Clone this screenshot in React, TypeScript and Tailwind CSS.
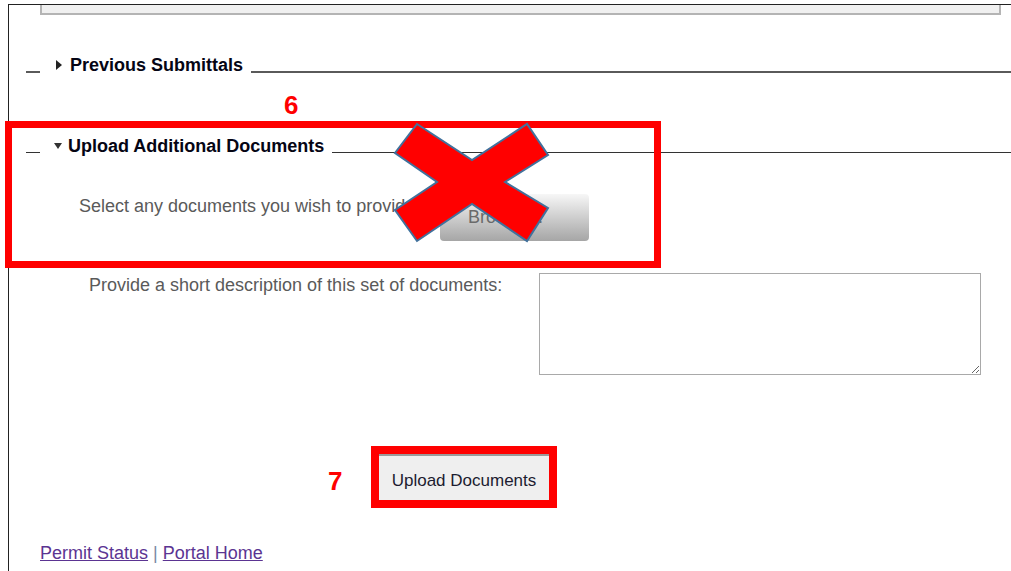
import React from "react";

// Collapsible section header drawn like a fieldset legend: short dash, caret, title, rule.
function SectionHeader({
  title,
  open,
  thick,
}: {
  title: string;
  open: boolean;
  thick?: boolean;
}) {
  const rule = thick ? "h-[2px] bg-[#5a5a5a]" : "h-px bg-[#333]";
  return (
    <div className="flex h-[24px] items-center">
      <div className={`ml-[17px] mt-[13px] w-[14px] ${rule}`}></div>
      {open ? (
        <span className="ml-[14px] mr-[6px] h-0 w-0 border-x-[4px] border-t-[6px] border-x-transparent border-t-[#333]"></span>
      ) : (
        <span className="ml-[16px] mr-[8px] h-0 w-0 border-y-[5px] border-l-[6px] border-y-transparent border-l-[#222]"></span>
      )}
      <span className="text-[18px] font-bold leading-[24px] text-[#050514]">
        {title}
      </span>
      <div className={`ml-[8px] mt-[13px] flex-1 ${rule}`}></div>
    </div>
  );
}

export default function App() {
  return (
    <div className="relative h-[571px] w-[1011px] overflow-hidden bg-white font-['Liberation_Sans',Arial,sans-serif]">
      {/* Page frame */}
      <div className="ml-[8px] mt-[4px] h-[567px] border-l border-t border-[#222]">
        {/* Bottom of the panel above */}
        <div className="ml-[31px] h-[10px] w-[961px] border-x-2 border-b-2 border-[#b4b4b4] bg-[#f0f0f0]"></div>

        <div className="mt-[38px]">
          <SectionHeader title="Previous Submittals" open={false} thick />
        </div>

        <div className="mt-[57px]">
          <SectionHeader title="Upload Additional Documents" open />
        </div>

        {/* File picker */}
        <div className="mt-[36px] flex items-start">
          <p className="ml-[70px] mt-[1px] w-[361px] text-[18px] leading-[22px] text-[#5a5a5a]">
            Select any documents you wish to provide:
          </p>
          <button className="h-[47px] w-[149px] rounded-[4px] bg-gradient-to-b from-[#f7f7f7] to-[#a6a6a6] pr-[18px] text-[18px] text-[#6a6a6a]">
            Browse...
          </button>
        </div>

        {/* Description */}
        <div className="mt-[32px] flex items-start">
          <label className="ml-[80px] mt-[1px] w-[450px] text-[18px] leading-[22px] text-[#5a5a5a]">
            Provide a short description of this set of documents:
          </label>
          <textarea className="h-[102px] w-[442px] border border-[#a9a9a9] bg-white"></textarea>
        </div>

        {/* Submit */}
        <div className="ml-[362px] mt-[71px] w-[186px] border-[8px] border-[#ff0000]">
          <button className="h-[46px] w-full border-t-2 border-[#9a9a9a] bg-[#efefef] pt-[5px] text-[17px] text-[#1c1c30]">
            Upload Documents
          </button>
        </div>

        {/* Footer links */}
        <div className="ml-[31px] mt-[34px] text-[18px] leading-[22px]">
          <a className="text-[#5b3492] underline" href="#">
            Permit Status
          </a>
          <span className="mx-[5px] text-[#7a8aa5]">|</span>
          <a className="text-[#5b3492] underline" href="#">
            Portal Home
          </a>
        </div>
      </div>

      {/* Step callouts */}
      <div className="absolute left-[5px] top-[121px] h-[147px] w-[656px] border-[7px] border-[#ff0000]"></div>
      <span className="absolute left-[284px] top-[86px] text-[26px] font-bold text-[#ff0000]">
        6
      </span>
      <span className="absolute left-[328px] top-[462px] text-[26px] font-bold text-[#ff0000]">
        7
      </span>
      <svg
        className="pointer-events-none absolute left-0 top-0"
        width="1011"
        height="571"
        viewBox="0 0 1011 571"
      >
        <polygon
          points="417,124 472,160 527,124 548,155 505,182 548,208 527,241 472,204 417,241 395,210 437,182 395,153"
          fill="#ff0000"
          stroke="#41719c"
          strokeWidth="2"
          strokeLinejoin="miter"
        />
      </svg>
    </div>
  );
}
